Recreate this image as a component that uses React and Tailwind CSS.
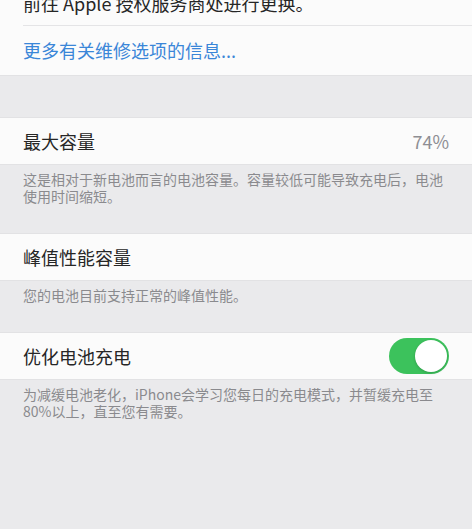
import React, { useState } from 'react'

const font = { fontFamily: '"Noto Sans CJK SC", "Noto Sans", sans-serif' }

function Footer({ children }) {
  return (
    <div className="px-[23px] pt-[6px] pb-[28px] text-[14px] leading-[17px] text-[#8a8a8e]">
      {children}
    </div>
  )
}

function Row({ title, children }) {
  return (
    <div className="flex h-[48px] items-center justify-between bg-[#fbfbfb] px-[23px] border-y border-[#e2e2e4]">
      <span className="text-[18px] text-[#262626]">{title}</span>
      {children}
    </div>
  )
}

function Toggle({ on, onChange }) {
  return (
    <button
      onClick={() => onChange(!on)}
      className={'flex h-[36px] w-[60px] items-center rounded-full p-[2px] ' + (on ? 'justify-end bg-[#3cc25c]' : 'justify-start bg-[#e5e5ea]')}
    >
      <span className="block h-[32px] w-[32px] rounded-full bg-white shadow-[0_1px_3px_rgba(0,0,0,0.2)]" />
    </button>
  )
}

export default function App() {
  const [optimized, setOptimized] = useState(true)

  return (
    <div className="h-[529px] w-[472px] overflow-hidden bg-[#eaeaec]" style={font}>
      {/* tail of the service notice + link */}
      <div className="bg-[#fbfbfb] border-b border-[#e2e2e4]">
        <p className="-mt-[9px] px-[23px] pb-[10px] text-[18px] leading-[24px] text-[#262626]">
          前往 Apple 授权服务商处进行更换。
        </p>
        <div className="ml-[23px] border-t border-[#e4e4e6]" />
        <div className="flex h-[49px] items-center px-[23px] text-[18px] text-[#3a86d8]">
          更多有关维修选项的信息...
        </div>
      </div>

      <div className="h-[41px]" />

      <Row title="最大容量">
        <span className="text-[18px] text-[#8e8e93]">74%</span>
      </Row>
      <Footer>
        这是相对于新电池而言的电池容量。容量较低可能导致充电后，电池使用时间缩短。
      </Footer>

      <Row title="峰值性能容量" />
      <Footer>您的电池目前支持正常的峰值性能。</Footer>

      <Row title="优化电池充电">
        <Toggle on={optimized} onChange={setOptimized} />
      </Row>
      <Footer>
        为减缓电池老化，iPhone会学习您每日的充电模式，并暂缓充电至80%以上，直至您有需要。
      </Footer>
    </div>
  )
}
